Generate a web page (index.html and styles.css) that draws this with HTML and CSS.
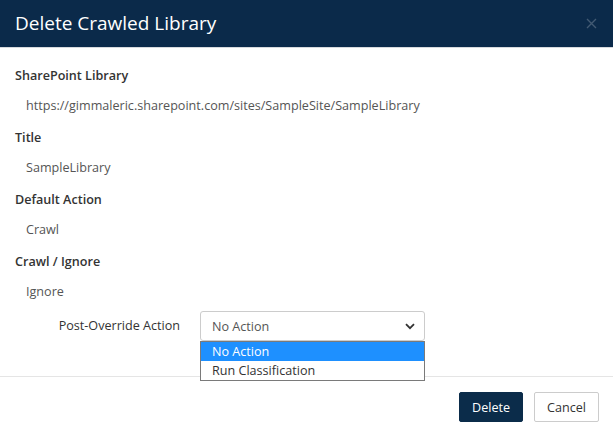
FILE: index.html
```html
<!DOCTYPE html>
<html lang="en">
<head>
    <meta charset="UTF-8">
    <title>Delete Crawled Library</title>
    <link rel="stylesheet" href="styles.css">
</head>
<body>
    <div class="modal">
        <div class="modal-header">
            <h4 class="modal-title">Delete Crawled Library</h4>
            <span class="close">
                <svg width="11" height="11" viewBox="0 0 11 11"><path d="M1 1L10 10M10 1L1 10" stroke="#425a73" stroke-width="1.4" fill="none"/></svg>
            </span>
        </div>
        <div class="modal-body">
            <div class="field-label">SharePoint Library</div>
            <div class="field-value">https://gimmaleric.sharepoint.com/sites/SampleSite/SampleLibrary</div>
            <div class="field-label">Title</div>
            <div class="field-value">SampleLibrary</div>
            <div class="field-label">Default Action</div>
            <div class="field-value">Crawl</div>
            <div class="field-label">Crawl / Ignore</div>
            <div class="field-value">Ignore</div>
            <div class="form-row">
                <label class="control-label">Post-Override Action</label>
                <div class="select-wrap">
                    <div class="select-box">
                        <span>No Action</span>
                        <svg width="10" height="7" viewBox="0 0 10 7"><path d="M1 1.2L5 5.2L9 1.2" stroke="#333" stroke-width="1.8" fill="none"/></svg>
                    </div>
                    <div class="select-list">
                        <div class="option selected">No Action</div>
                        <div class="option">Run Classification</div>
                    </div>
                </div>
            </div>
        </div>
        <div class="modal-footer">
            <button class="btn btn-primary">Delete</button>
            <button class="btn btn-default">Cancel</button>
        </div>
    </div>
</body>
</html>
```

FILE: styles.css
```css
body {
    margin: 0;
    font-family: "Open Sans", "Noto Sans", sans-serif;
    font-size: 12.6px;
    color: #333;
    background: #fff;
}

.modal {
    width: 613px;
    height: 437px;
    display: flex;
    flex-direction: column;
}

.modal-header {
    height: 47px;
    background-color: #0b2a4a;
    border-bottom: 1px solid #d6d9dd;
    display: flex;
    align-items: center;
    justify-content: space-between;
    padding: 0 15px;
}

.modal-title {
    margin: 0;
    font-size: 19px;
    font-weight: 400;
    color: #fff;
    line-height: 24px;
    padding-bottom: 1px;
}

.close {
    display: flex;
    margin-right: 1px;
}

.modal-body {
    padding: 18px 15px 0 15px;
    height: 310px;
}

.field-label {
    font-weight: 600;
    line-height: 20px;
    margin-bottom: 10px;
    color: #333;
}

.field-value {
    line-height: 20px;
    margin-bottom: 12px;
    padding-left: 11px;
    color: #555;
}

.form-row {
    display: flex;
    align-items: flex-start;
    margin-top: -3px;
}

.control-label {
    width: 165px;
    padding-right: 20px;
    text-align: right;
    line-height: 30px;
    color: #333;
}

.select-wrap {
    position: relative;
    width: 225px;
}

.select-box {
    height: 28px;
    border: 1px solid #ccc;
    border-radius: 3px;
    display: flex;
    align-items: center;
    justify-content: space-between;
    padding: 0 9px 0 11px;
    color: #555;
}

.select-list {
    position: absolute;
    top: 30px;
    left: 0;
    width: 223px;
    border: 1px solid #7a7a7a;
    background: #fff;
    z-index: 2;
}

.option {
    height: 19px;
    line-height: 19px;
    padding-left: 11px;
    color: #333;
}

.option.selected {
    background-color: #1e90ff;
    color: #fff;
}

.modal-footer {
    border-top: 1px solid #e5e5e5;
    display: flex;
    justify-content: flex-end;
    gap: 11px;
    padding: 15px 14px 0 0;
}

.btn {
    height: 30px;
    padding: 0 12px;
    font-family: inherit;
    font-size: 12.6px;
    border-radius: 2px;
    cursor: pointer;
}

.btn-primary {
    background-color: #0b2c4a;
    border: 1px solid #0b2c4a;
    color: #fff;
}

.btn-default {
    background-color: #fff;
    border: 1px solid #ccc;
    color: #333;
}
```
